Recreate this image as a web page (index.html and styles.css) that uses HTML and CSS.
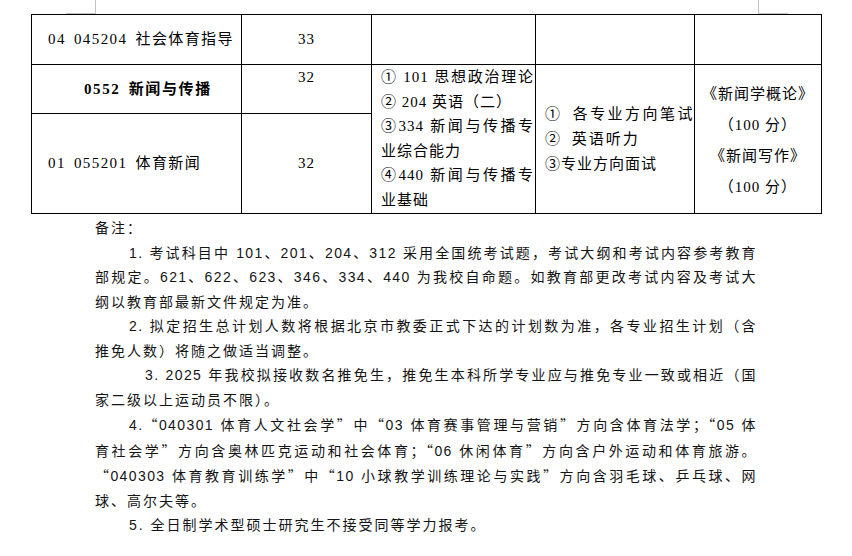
FILE: index.html
```html
<!DOCTYPE html>
<html lang="zh-CN">
<head>
<meta charset="utf-8">
<title>招生目录</title>
<link rel="stylesheet" href="styles.css">
</head>
<body>
<div class="page">
  <span class="crop crop-l"></span>
  <span class="crop crop-r"></span>
  <table class="grid">
    <colgroup>
      <col class="c1"><col class="c2"><col class="c3"><col class="c4"><col class="c5">
    </colgroup>
    <tr class="r1">
      <td class="name">04 045204 社会体育指导</td>
      <td class="num">33</td>
      <td></td><td></td><td></td>
    </tr>
    <tr class="r2">
      <td class="name major">0552 新闻与传播</td>
      <td class="num top">32</td>
      <td rowspan="2" class="subj">
        <div class="full">① 101 思想政治理论</div>
        <div>② 204 英语（二）</div>
        <div class="full">③334 新闻与传播专</div>
        <div>业综合能力</div>
        <div class="full">④440 新闻与传播专</div>
        <div>业基础</div>
      </td>
      <td rowspan="2" class="retest">
        <div class="full">① 各专业方向笔试</div>
        <div class="wide">② 英语听力</div>
        <div>③专业方向面试</div>
      </td>
      <td rowspan="2" class="books">
        <div>《新闻学概论》</div>
        <div>（100 分）</div>
        <div>《新闻写作》</div>
        <div>（100 分）</div>
      </td>
    </tr>
    <tr class="r3">
      <td class="name">01 055201 体育新闻</td>
      <td class="num">32</td>
    </tr>
  </table>
  <div class="notes">
    <div class="line last">备注：</div>
    <div class="line full ind1">1. 考试科目中 101、201、204、312 采用全国统考试题，考试大纲和考试内容参考教育</div>
    <div class="line full">部规定。621、622、623、346、334、440 为我校自命题。如教育部更改考试内容及考试大</div>
    <div class="line last">纲以教育部最新文件规定为准。</div>
    <div class="line full ind1">2. 拟定招生总计划人数将根据北京市教委正式下达的计划数为准，各专业招生计划（含</div>
    <div class="line last">推免人数）将随之做适当调整。</div>
    <div class="line full ind3">3. 2025 年我校拟接收数名推免生，推免生本科所学专业应与推免专业一致或相近（国</div>
    <div class="line last">家二级以上运动员不限）。</div>
    <div class="line full ind1">4.<span class="q">“</span>040301 体育人文社会学<span class="q">”</span>中<span class="q">“</span>03 体育赛事管理与营销<span class="q">”</span>方向含体育法学；<span class="q">“</span>05 体</div>
    <div class="line full">育社会学<span class="q">”</span>方向含奥林匹克运动和社会体育；<span class="q">“</span>06 休闲体育<span class="q">”</span>方向含户外运动和体育旅游。</div>
    <div class="line full"><span class="q">“</span>040303 体育教育训练学<span class="q">”</span>中<span class="q">“</span>10 小球教学训练理论与实践<span class="q">”</span>方向含羽毛球、乒乓球、网</div>
    <div class="line last">球、高尔夫等。</div>
    <div class="line last ind1">5. 全日制学术型硕士研究生不接受同等学力报考。</div>
  </div>
</div>
</body>
</html>
```

FILE: styles.css
```css
html, body {
  margin: 0;
  padding: 0;
  background: #ffffff;
}

.page {
  position: relative;
  width: 852px;
  height: 556px;
  padding-top: 14px;
  box-sizing: border-box;
  overflow: hidden;
}

/* Word corner marks */
.crop {
  position: absolute;
  top: 0;
  width: 29px;
  height: 13px;
  border-bottom: 1px solid #c3c3c3;
}
.crop-l {
  left: 66px;
  border-right: 1px solid #c3c3c3;
}
.crop-r {
  left: 758px;
  border-left: 1px solid #c3c3c3;
}

.grid {
  margin-left: 31px;
  width: 791px;
  table-layout: fixed;
  border-collapse: collapse;
  font-family: "Liberation Serif", "Noto Sans CJK SC", serif;
  font-size: 15px;
  letter-spacing: 1px;
  word-spacing: 3px;
  color: #000;
}
.grid td {
  border: 1px solid #000;
  padding: 0;
  vertical-align: middle;
  line-height: 25px;
}
.c1 { width: 210px; }
.c2 { width: 130px; }
.c3 { width: 164px; }
.c4 { width: 159px; }
.c5 { width: 127px; }

.r1 { height: 50px; }
.r2 { height: 49px; }
.r3 { height: 100px; }

.name {
  padding-left: 16px !important;
  white-space: nowrap;
  letter-spacing: 1.4px;
}
.major {
  padding-left: 52px !important;
  font-weight: bold;
  letter-spacing: 1.6px;
}
.num {
  text-align: center;
}
.num.top {
  vertical-align: top !important;
  line-height: 24px !important;
}

.subj {
  vertical-align: top !important;
  padding: 0 1px 0 9px !important;
  line-height: 24.6px !important;
  word-spacing: 0;
}
.subj div,
.retest div {
  white-space: nowrap;
  text-align: left;
}
.subj .full,
.retest .full {
  text-align: justify;
  text-align-last: justify;
}

.retest {
  padding: 0 0 0 9px !important;
  word-spacing: 4px;
}
.retest .full {
  letter-spacing: 1.5px;
}
.retest .wide {
  letter-spacing: 2px;
}

.books {
  text-align: center;
  line-height: 31px !important;
  word-spacing: 0;
  padding-top: 4px !important;
}

.notes {
  margin: 2px 0 0 95px;
  width: 662px;
  font-family: "Liberation Sans", "Noto Sans CJK SC", sans-serif;
  font-size: 14px;
  line-height: 24.5px;
  color: #141414;
}
.line {
  white-space: nowrap;
}
.line.full {
  letter-spacing: 1.4px;
  text-align: justify;
  text-align-last: justify;
}
.line.last {
  letter-spacing: 2px;
  text-align: left;
}
.ind1 { padding-left: 34px; }
.ind3 { padding-left: 50px; }

.q {
  font-family: "Noto Sans CJK SC", sans-serif;
}
```
